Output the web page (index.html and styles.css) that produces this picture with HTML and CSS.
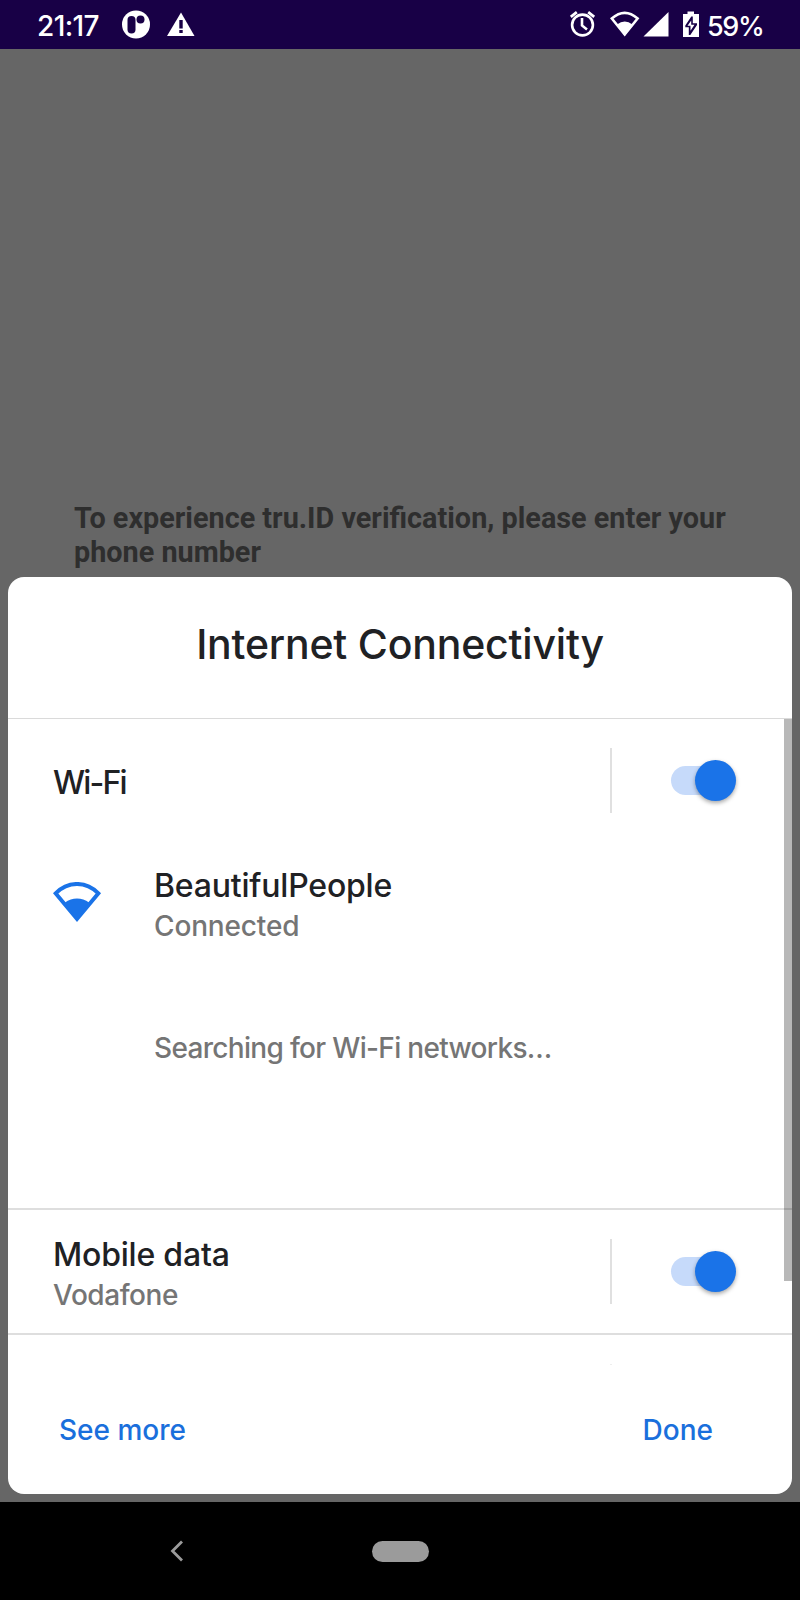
FILE: index.html
```html
<!DOCTYPE html>
<html lang="en">
<head>
<meta charset="utf-8">
<title>Internet Connectivity</title>
<link rel="stylesheet" href="styles.css">
</head>
<body>
<div class="phone">
  <header class="status">
    <span class="clock">21:17</span>
    <svg class="status-icons" width="80" height="49" viewBox="0 0 80 49">
      <circle cx="16" cy="24.5" r="14" fill="#fff"/>
      <rect x="7.500" y="16" width="8" height="17.500" rx="4" fill="#180046"/>
      <circle cx="20.500" cy="19.500" r="4" fill="#180046"/>
      <path d="M61 12.500 74.500 36H47Z" fill="#fff"/>
      <path d="M59.300 20h3.400v8.500h-3.400zM59.300 30h3.400v3h-3.400z" fill="#180046"/>
    </svg>
    <svg class="status-system" width="135" height="49" viewBox="0 0 135 49">
      <g fill="none" stroke="#fff" stroke-width="2.6">
        <circle cx="17.500" cy="25" r="10.400"/>
        <path d="M17 18v7.500l5 4"/>
        <path d="M5.800 16.800l6-4.600M23.200 12.200l6 4.600" stroke-width="2.800"/>
        <path d="M46.800 18.500Q59.700 7.200 72.600 18.500L59.700 34.500Z" stroke-width="2.600"/>
      </g>
      <path d="M52 24.500Q59.700 18.500 67.500 24.500L59.700 36Z" fill="#fff"/>
      <path d="M78.500 36.500H103.500V12Z" fill="#fff"/>
      <path d="M118 14h4.500v-2.500h6.500V14h5v23H118Z" fill="#fff"/>
      <path d="M127.800 16.500h-1.500L120.300 25.500v1.800h3.500v7.700h1.500L132 25v-1.700h-4.200Z" fill="#180046"/>
      <path d="M126.200 20.500 122.500 25.700h3v5l4-6H126.200Z" fill="#fff"/>
    </svg>
    <span class="percent">59%</span>
  </header>

  <main class="stage">
    <p class="prompt">To experience tru.ID verification, please enter your phone number</p>
    <section class="panel">
      <h1 class="title"><span>Internet Connectivity</span></h1>
      <div class="settings">
        <div class="row wifi">
          <div class="label wifi-name">Wi-Fi</div>
          <div class="control"><span class="switch"></span></div>
        </div>
        <div class="network">
          <svg class="wifi-icon" width="50" height="42" viewBox="0 0 50 42">
            <path d="M2.600 11.300C15 -1.200 33 -1.200 45.400 11.300L24 37Z" fill="none" stroke="#1a73e8" stroke-width="3.900"/>
            <path d="M12 20.500C19 15 29 15 36 20.500L24 38.500Z" fill="#1a73e8"/>
          </svg>
          <div>
            <div class="label network-name">BeautifulPeople</div>
            <div class="sub connected">Connected</div>
          </div>
        </div>
        <div class="sub searching">Searching for Wi-Fi networks…</div>
        <div class="row mobile">
          <div class="mobile-text">
            <div class="label mobile-name">Mobile data</div>
            <div class="sub carrier">Vodafone</div>
          </div>
          <div class="control"><span class="switch"></span></div>
        </div>
        <div class="next-row"></div>
        <div class="scrollbar"></div>
      </div>
      <div class="actions">
        <span class="action more">See more</span>
        <span class="action done">Done</span>
      </div>
    </section>
  </main>

  <nav class="nav">
    <svg class="back" width="14" height="22" viewBox="0 0 14 22"><path d="M12 1.500 2.500 11l9.500 9.500" fill="none" stroke="#9b9b9b" stroke-width="2.800"/></svg>
    <span class="home"></span>
  </nav>
</div>
</body>
</html>
```
FILE: styles.css
```css
* { box-sizing: border-box; }
body { margin: 0; background: #000; font-family: Inter, "Open Sans", sans-serif; }
.phone { width: 800px; height: 1600px; display: flex; flex-direction: column; overflow: hidden; }
.status { height: 49px; flex: none; display: flex; align-items: center; background: #180046; color: #fff; padding-left: 37px; font-size: 28px; font-weight: 540; line-height: 49px; white-space: nowrap; }
.status > * { flex: none; }
.clock { width: 83px; letter-spacing: -0.6px; padding-top: 3px; }
.status-icons { margin-right: 365px; }
.percent { margin-left: 7px; letter-spacing: -1.4px; padding-top: 3px; font-size: 27px; }
.stage { height: 1453px; flex: none; background: #666; display: flex; flex-direction: column; padding: 0 8px 8px; }
.prompt { margin: 0; padding: 452px 40px 0 66px; height: 528px; font: bold 28.8px/34px Roboto, sans-serif; color: #2e2e2e; }
.panel { height: 917px; background: #fff; border-radius: 16px; overflow: hidden; display: flex; flex-direction: column; }
.title { margin: 0; height: 142px; flex: none; border-bottom: 1px solid #dadada; text-align: center; font-size: 41px; font-weight: 450; line-height: 134px; color: #202124; letter-spacing: -0.2px; white-space: nowrap; }
.settings { position: relative; height: 646px; flex: none; display: flex; flex-direction: column; }
.row { display: flex; justify-content: space-between; padding-left: 45px; flex: none; }
.wifi { height: 122px; align-items: center; }
.label { font-size: 32px; line-height: 40px; color: #202124; font-weight: 460; white-space: nowrap; letter-spacing: -0.2px; }
.wifi-name { letter-spacing: -1.8px; padding-top: 5px; }
.sub { font-size: 28px; line-height: 40px; color: #757575; font-weight: 450; white-space: nowrap; letter-spacing: -0.15px; }
.control { width: 182px; height: 65px; border-left: 2px solid #e0e0e0; display: flex; align-items: center; padding-left: 59px; }
.switch { width: 65px; height: 29px; border-radius: 15px; background: linear-gradient(90deg, #c6dafa 0 50px, transparent 50px); display: flex; align-items: center; justify-content: flex-end; }
.switch::after { content: ""; width: 41px; height: 41px; border-radius: 50%; background: #1a73e8; box-shadow: 0 2px 4px rgba(0,0,0,.35); }
.network { height: 120px; display: flex; padding-left: 45px; padding-top: 25px; }
.wifi-icon { margin: 16px 51px 0 0; flex: none; }
.searching { padding-left: 146px; height: 247px; padding-top: 67px; letter-spacing: -0.68px; }
.mobile { height: 127px; border-top: 2px solid #dedede; border-bottom: 2px solid #dedede; align-items: center; }
.mobile-text { padding-top: 6px; }
.carrier { letter-spacing: -0.45px; }
.next-row { width: 2px; height: 1px; margin: 29px 0 0 602px; background: #eee; }
.scrollbar { position: absolute; right: 0; top: 0; width: 8px; height: 562px; background: rgba(0,0,0,.28); }
.actions { flex: 1; display: flex; justify-content: space-between; padding: 45px 79px 0 51px; }
.action { font-size: 28px; line-height: 40px; font-weight: 500; color: #1a6fdc; white-space: nowrap; }
.nav { height: 98px; flex: none; background: #000; display: flex; align-items: center; padding-left: 170px; }
.home { width: 57px; height: 21px; border-radius: 10.5px; background: #9b9b9b; margin-left: 188px; }
```
